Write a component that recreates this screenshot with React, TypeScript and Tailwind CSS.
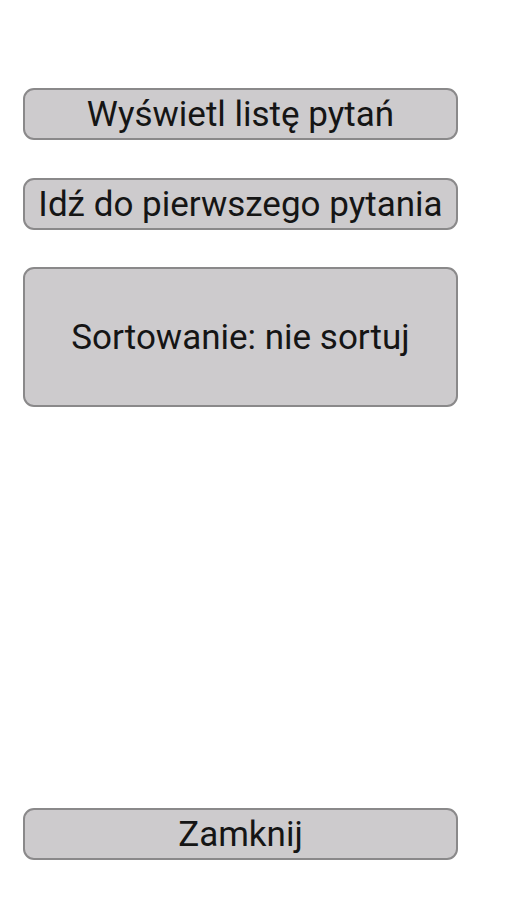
export default function App() {
    const btn =
        "w-[435px] flex items-center justify-center bg-[#cdcbcd] border-2 border-[#8a898a] rounded-[11px] text-[#151515] text-[35px] leading-none whitespace-nowrap";

    return (
        <div className="h-[900px] bg-white flex flex-col pl-[23px] pt-[88px] pb-[40px] font-['Roboto',sans-serif]">
            <button className={`${btn} h-[52px]`}>Wyświetl listę pytań</button>
            <button className={`${btn} h-[52px] mt-[38px]`}>Idź do pierwszego pytania</button>
            <button className={`${btn} h-[140px] mt-[37px]`}>Sortowanie: nie sortuj</button>
            <div className="flex-1" />
            <button className={`${btn} h-[52px]`}>Zamknij</button>
        </div>
    );
}
